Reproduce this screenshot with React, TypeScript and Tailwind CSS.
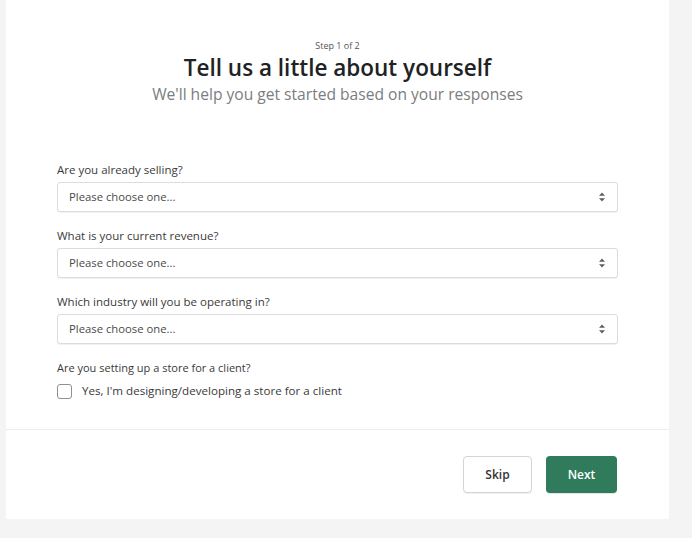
import React from "react";

function Arrows() {
  return (
    <svg width="8" height="10" viewBox="0 0 8 10" className="shrink-0">
      <path d="M4 0.5 L7 3.8 H1 Z" fill="#5c5f62" />
      <path d="M4 9.5 L7 6.2 H1 Z" fill="#5c5f62" />
    </svg>
  );
}

function SelectField({ label }: { label: string }) {
  return (
    <div className="flex flex-col">
      <div className="text-[11.5px] leading-[16px] text-[#3a3a3a] mb-[4px]">{label}</div>
      <div className="h-[30px] flex items-center justify-between rounded-[3px] border border-[#dadcdf] shadow-[0_1px_0_rgba(0,0,0,0.05)] pl-[11px] pr-[11px] bg-white">
        <span className="text-[11.3px] text-[#4a4a4a]">Please choose one...</span>
        <Arrows />
      </div>
    </div>
  );
}

export default function App() {
  return (
    <div
      className="w-[692px] h-[538px] bg-[#f4f4f4] overflow-hidden"
      style={{ fontFamily: '"Open Sans", "Noto Sans", sans-serif' }}
    >
      <div className="ml-[6px] w-[663px] h-[519px] bg-white flex flex-col">
        <div className="h-[429px] px-[51px] flex flex-col">
          <div className="pt-[39px] flex flex-col items-center">
            <div className="text-[9px] leading-[14px] text-[#555]">Step 1 of 2</div>
            <div className="mt-[2px] text-[22.5px] leading-[26px] font-semibold text-[#202223]">
              Tell us a little about yourself
            </div>
            <div className="mt-[3px] text-[15.6px] leading-[20px] text-[#7a7d80]">
              We'll help you get started based on your responses
            </div>
          </div>
          <div className="mt-[58px] flex flex-col gap-[16px]">
            <SelectField label="Are you already selling?" />
            <SelectField label="What is your current revenue?" />
            <SelectField label="Which industry will you be operating in?" />
            <div className="flex flex-col">
              <div className="text-[11px] leading-[16px] text-[#3a3a3a]">
                Are you setting up a store for a client?
              </div>
              <div className="mt-[7px] flex items-center gap-[10px]">
                <div className="w-[15px] h-[15px] rounded-[3px] border border-[#8c9196] bg-white" />
                <span className="text-[11.6px] leading-[16px] text-[#3a3a3a]">
                  Yes, I'm designing/developing a store for a client
                </span>
              </div>
            </div>
          </div>
        </div>
        <div className="h-px bg-[#ececec]" />
        <div className="flex-1 flex items-center justify-end gap-[14px] pr-[52px]">
          <button className="w-[69px] h-[37px] rounded-[4px] border border-[#d2d4d6] bg-white text-[12px] font-semibold text-[#333] shadow-[0_1px_0_rgba(0,0,0,0.05)]">
            Skip
          </button>
          <button className="w-[71px] h-[37px] rounded-[4px] bg-[#2f7b5b] text-[12px] font-semibold text-white shadow-[0_1px_0_rgba(0,0,0,0.1)]">
            Next
          </button>
        </div>
      </div>
    </div>
  );
}
